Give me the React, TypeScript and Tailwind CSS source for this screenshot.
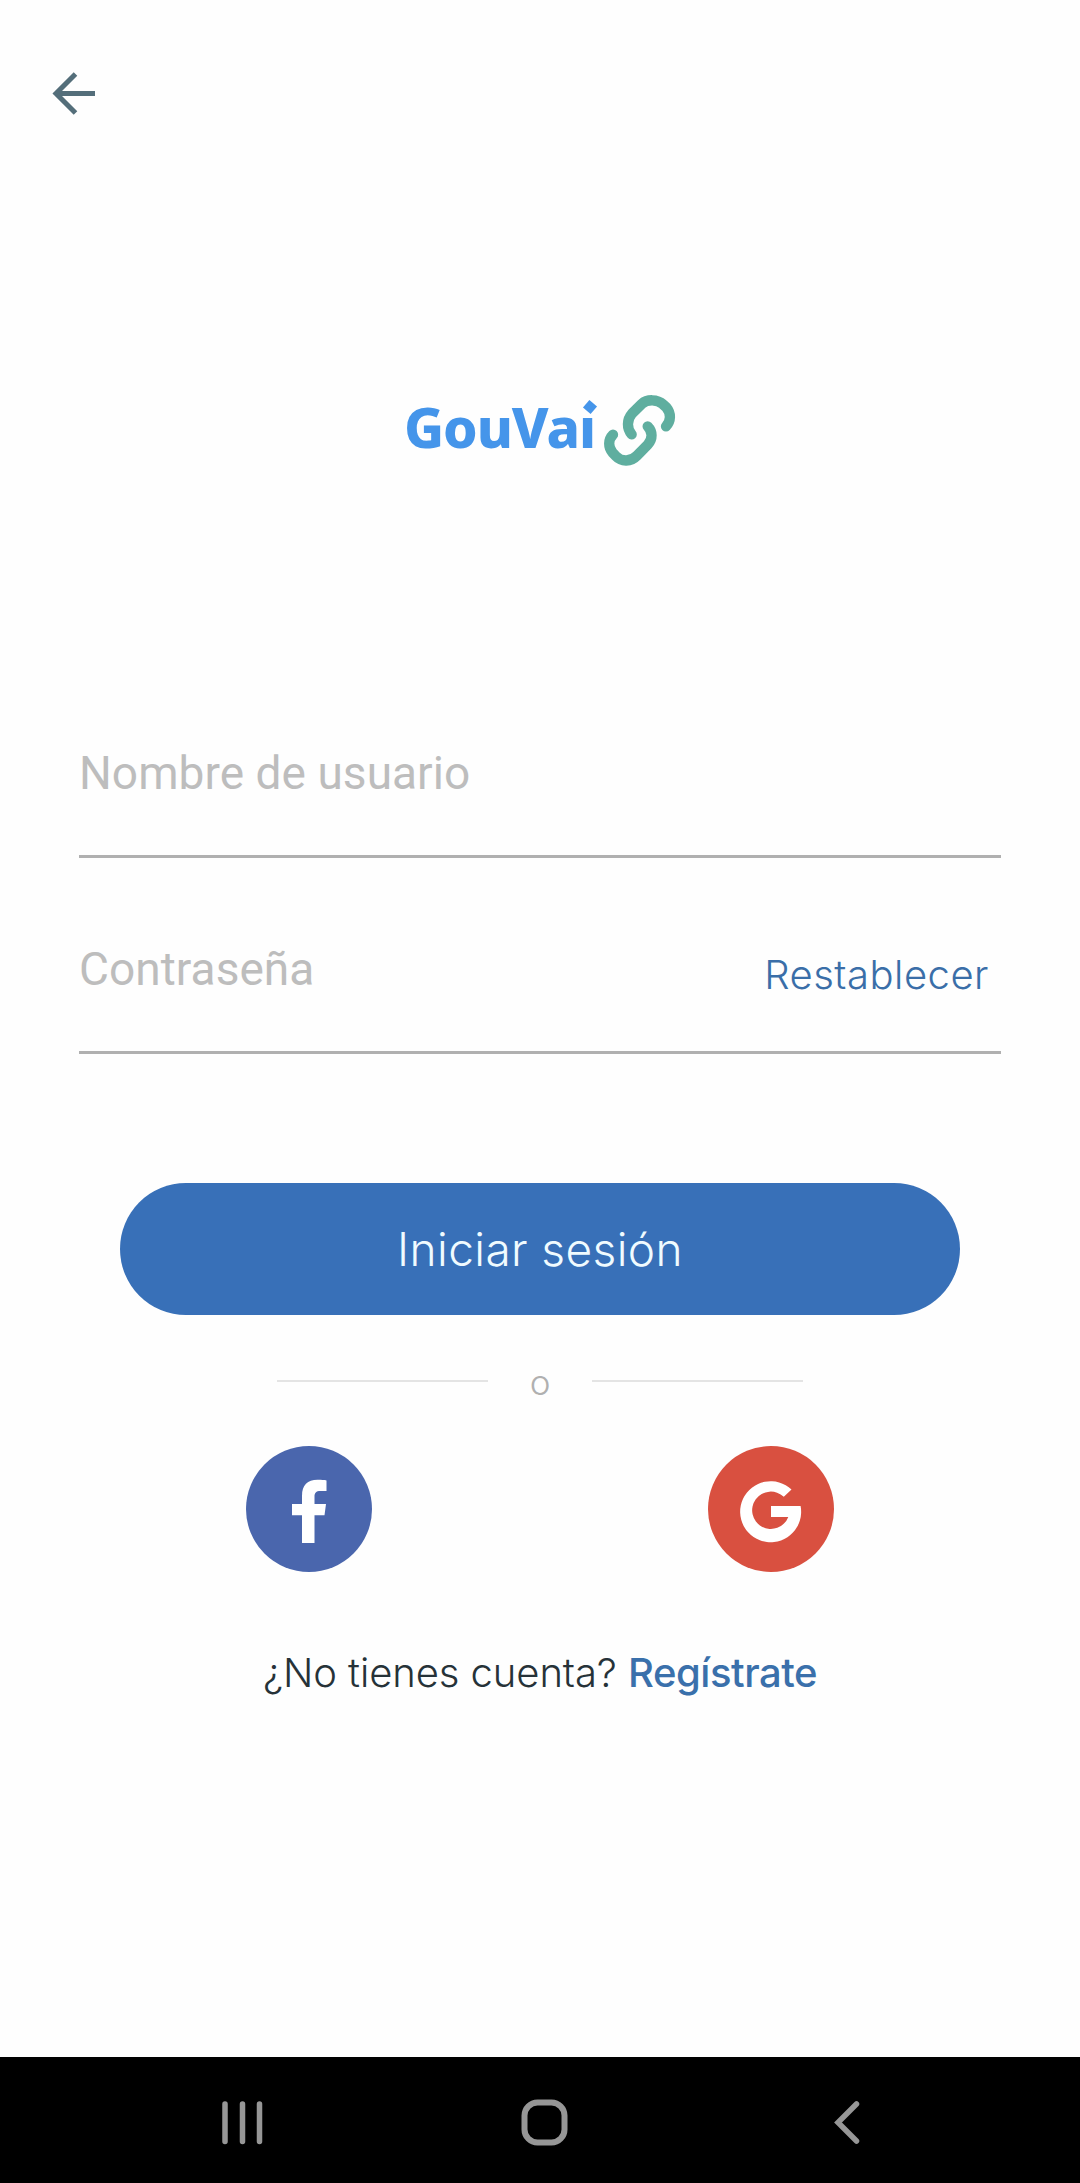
import type { ReactNode } from 'react';

function BackArrow() {
  return (
    <svg width="44" height="44" viewBox="0 0 44 44" fill="none" stroke="#546e7a" strokeWidth="5">
      <path d="M23.5 2 L4 21.5 L23.5 41 M4 21.5 H43" />
    </svg>
  );
}

function ChainIcon() {
  return (
    <svg
      className="ml-[11px] shrink-0"
      width="74"
      height="74"
      viewBox="638 72 222 222"
      fill="none"
      stroke="#5fae9f"
      strokeWidth="31"
      strokeLinecap="round"
    >
      <path d="M827 169 C842 154 843 130 828 112 L818 103 C801 87 770 87 754 102 L725 131 C709 149 709 176 724 193" />
      <path d="M772 169 C787 184 788 207 772 224 L740 257 C722 276 693 276 677 259 L667 248 C653 232 653 209 668 194" />
    </svg>
  );
}

// Logotipo: el punto de la "i" es un rombo
function Logo() {
  return (
    <div className="flex h-[74px] items-center pl-[404px]">
      <span className="relative mb-[8px] w-[188px] font-['Noto_Sans',sans-serif] text-[55px] leading-[66px] font-extrabold tracking-[-1.1px] whitespace-nowrap text-[#4595ea]">
        GouVai
        <span className="absolute top-[5px] right-[-8px] flex h-[16px] w-[20px] items-center justify-center bg-[#fefefe]">
          <span className="h-[10px] w-[10px] rotate-[40deg] bg-[#4595ea]" />
        </span>
      </span>
      <ChainIcon />
    </div>
  );
}

function Field({ label, action }: { label: string; action?: ReactNode }) {
  return (
    <div className="flex h-[140px] items-start justify-between border-b-[3px] border-[#b0b0b0] pt-[28px]">
      <span className="font-[Roboto,sans-serif] text-[46px] leading-[54px] font-normal tracking-[0.05px] text-[#bdbdbd]">
        {label}
      </span>
      {action}
    </div>
  );
}

function FacebookIcon() {
  return (
    <svg width="126" height="126" viewBox="0 0 126 126">
      <circle cx="63" cy="63" r="63" fill="#4a66ad" />
      <path
        fill="#fff"
        d="M56 97 V69.3 H46 V58 H56 V50 C56 39 61.5 33.8 71.5 33.8 C75.5 33.8 78.5 34 80.5 34.4 V45 H74.5 C70 45 68.5 47 68.5 50.5 V58 H80 L78.5 69.3 H68.5 V97 Z"
      />
    </svg>
  );
}

function GoogleIcon() {
  return (
    <svg width="126" height="126" viewBox="0 0 126 126">
      <circle cx="63" cy="63" r="63" fill="#d95040" />
      <path
        fill="#fff"
        d="M83.5 43.5 A30.5 30.5 0 1 0 92.6 60 H63 V71 H80.3 A18.7 18.7 0 1 1 75.8 50.8 Z"
      />
    </svg>
  );
}

function NavBar() {
  return (
    <nav className="flex h-[126px] items-center bg-black pt-[5px] pl-[220px]">
      <svg width="44" height="48" viewBox="0 0 44 48" stroke="#969696" strokeWidth="5.5" strokeLinecap="round">
        <path d="M5 5 V42.5 M22.5 5 V42.5 M39.5 5 V42.5" />
      </svg>
      <svg className="ml-[256px]" width="48" height="48" viewBox="0 0 48 48" fill="none" stroke="#969696" strokeWidth="6">
        <rect x="4.5" y="3.5" width="40" height="40" rx="13" />
      </svg>
      <svg
        className="ml-[264px]"
        width="30"
        height="48"
        viewBox="0 0 30 48"
        fill="none"
        stroke="#969696"
        strokeWidth="5.5"
        strokeLinecap="round"
      >
        <path d="M24.5 5 L6 23.5 L24.5 42" />
      </svg>
    </nav>
  );
}

export default function App() {
  return (
    <div className="flex h-[2183px] w-[1080px] flex-col bg-[#fefefe] font-[Inter,sans-serif] font-light">
      <header className="flex h-[394px] items-start pt-[72px] pl-[52px]">
        <button type="button" aria-label="Volver">
          <BackArrow />
        </button>
      </header>

      <Logo />

      <main className="flex flex-1 flex-col">
        <form className="flex flex-col px-[79px] pt-[250px]">
          <Field label="Nombre de usuario" />
          <div className="h-[56px]" />
          <Field
            label="Contraseña"
            action={
              <a className="mt-[6px] mr-[12px] text-[40px] leading-[54px] tracking-[0.5px] text-[#3a6ea8]">Restablecer</a>
            }
          />
          <button
            type="button"
            className="mx-[41px] mt-[129px] h-[132px] rounded-full bg-[#3870b8] pt-[1px] text-[46px] tracking-[0.4px] text-[#f0fbff]"
          >
            Iniciar sesión
          </button>
        </form>

        <div className="mt-[38px] flex h-[56px] items-center justify-center">
          <span className="h-[2px] w-[211px] bg-[#e4e4e4]" />
          <span className="w-[104px] pt-[2px] text-center text-[35px] leading-[50px] text-[#b0b0b0]">o</span>
          <span className="h-[2px] w-[211px] bg-[#e4e4e4]" />
        </div>

        <div className="mt-[37px] flex justify-between pr-[246px] pl-[246px]">
          <button type="button" aria-label="Facebook">
            <FacebookIcon />
          </button>
          <button type="button" aria-label="Google">
            <GoogleIcon />
          </button>
        </div>

        <p className="mt-[74px] pl-[263px] text-[40px] leading-[54px] tracking-[-0.08px] whitespace-nowrap text-[#263238]">
          ¿No tienes cuenta? <a className="font-medium tracking-[-0.45px] text-[#3a70ab]">Regístrate</a>
        </p>
      </main>

      <NavBar />
    </div>
  );
}
